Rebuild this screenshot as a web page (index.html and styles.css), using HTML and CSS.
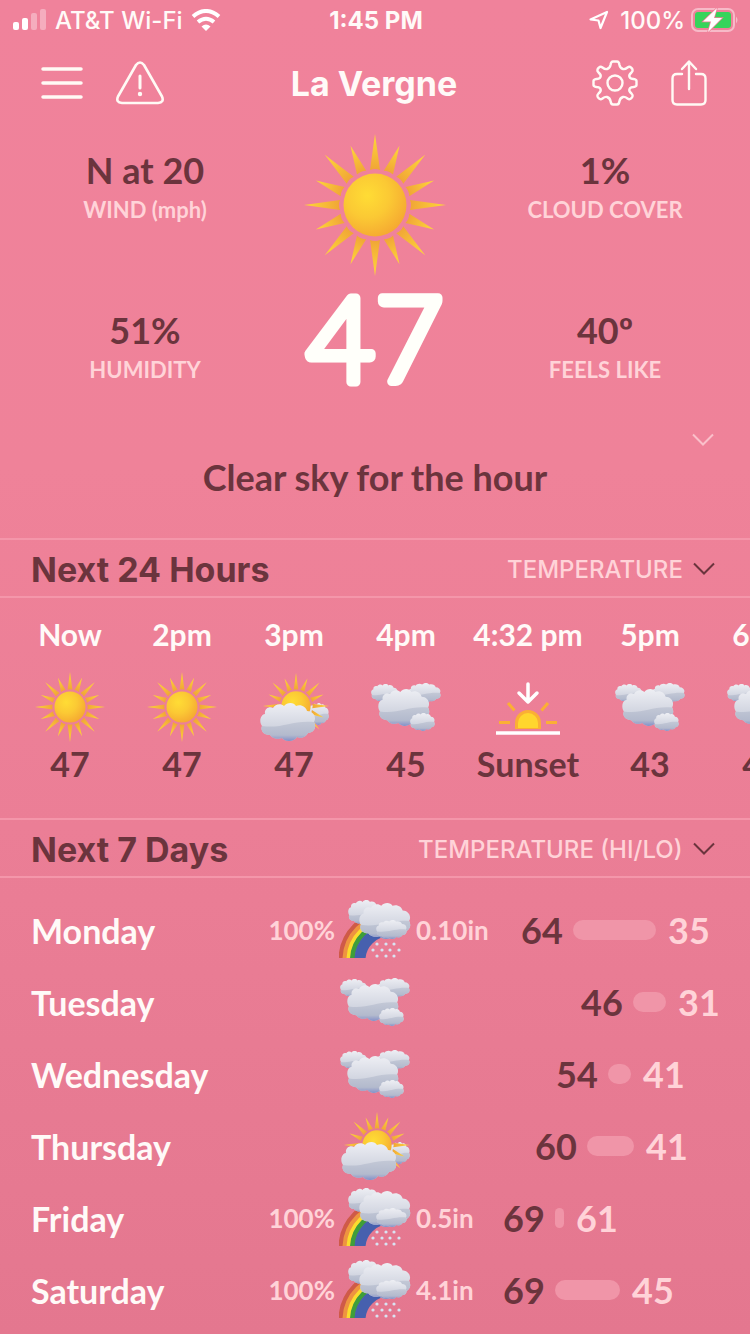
FILE: index.html
```html
<!DOCTYPE html>
<html lang="en">
<head>
  <meta charset="UTF-8">
  <meta name="viewport" content="width=device-width, initial-scale=1.0">
  <title>La Vergne</title>
  <link rel="stylesheet" href="styles.css">
</head>
<body>
  <!-- shared weather icons -->
  <svg class="sprite" width="0" height="0" aria-hidden="true">
    <defs>
      <radialGradient id="ball" cx="0.38" cy="0.35" r="0.7">
        <stop offset="0" stop-color="#ffdc35"/>
        <stop offset="0.5" stop-color="#fbc934"/>
        <stop offset="1" stop-color="#f5a831"/>
      </radialGradient>
      <linearGradient id="rayFill" x1="0" y1="0" x2="0" y2="1">
        <stop offset="0" stop-color="#ffd83a"/>
        <stop offset="1" stop-color="#f0a536"/>
      </linearGradient>
      <linearGradient id="cloudFill" x1="0" y1="0" x2="0" y2="1">
        <stop offset="0" stop-color="#eeeff4"/>
        <stop offset="0.7" stop-color="#ced2de"/>
        <stop offset="1" stop-color="#bcc3d4"/>
      </linearGradient>
      <linearGradient id="cloudShade" x1="0" y1="0" x2="0" y2="1">
        <stop offset="0" stop-color="#c3c8d6"/>
        <stop offset="0.7" stop-color="#b3bacd"/>
        <stop offset="1" stop-color="#8490c8"/>
      </linearGradient>
      <clipPath id="bowClip"><path d="M0 18H42V38L34 46L27 58H0Z"/></clipPath>
      <path id="ray" d="M71 0L76 36Q71 34 66 36Z" fill="url(#rayFill)"/>
      <path id="shortRay" d="M71 7L76 36Q71 34 66 36Z" fill="url(#rayFill)"/>
      <g id="rays">
        <use href="#ray"/>
        <use href="#ray" transform="rotate(45 71 71)"/>
        <use href="#ray" transform="rotate(90 71 71)"/>
        <use href="#ray" transform="rotate(135 71 71)"/>
        <use href="#ray" transform="rotate(180 71 71)"/>
        <use href="#ray" transform="rotate(225 71 71)"/>
        <use href="#ray" transform="rotate(270 71 71)"/>
        <use href="#ray" transform="rotate(315 71 71)"/>
        <use href="#shortRay" transform="rotate(22.5 71 71)"/>
        <use href="#shortRay" transform="rotate(67.5 71 71)"/>
        <use href="#shortRay" transform="rotate(112.5 71 71)"/>
        <use href="#shortRay" transform="rotate(157.5 71 71)"/>
        <use href="#shortRay" transform="rotate(202.5 71 71)"/>
        <use href="#shortRay" transform="rotate(247.5 71 71)"/>
        <use href="#shortRay" transform="rotate(292.5 71 71)"/>
        <use href="#shortRay" transform="rotate(337.5 71 71)"/>
      </g>
    </defs>
    <symbol id="sun" viewBox="0 0 142 142">
      <use href="#rays"/>
      <circle cx="71" cy="71" r="31.5" fill="url(#ball)"/>
    </symbol>
    <symbol id="cloud" viewBox="0 0 56 38" preserveAspectRatio="none">
      <path fill="url(#cloudFill)" d="M2 23C-1 19 0 12 5 11C4 6 9 3 13 5C15 1 21 0 24 3C27 -1 34 -1 36 3C41 1 46 4 47 8C53 8 57 14 54 19C57 24 54 30 48 30C46 34 41 36 37 34C34 39 25 39 22 35C17 37 12 35 10 32C4 32 0 28 2 23Z"/>
      <path fill="url(#cloudShade)" d="M2 23C22 26 32 17 54 19C57 24 54 30 48 30C46 34 41 36 37 34C34 39 25 39 22 35C17 37 12 35 10 32C4 32 0 28 2 23Z"/>
    </symbol>
    <symbol id="partly" viewBox="0 0 70 70">
      <use href="#cloud" x="48" y="31" width="22" height="22"/>
      <use href="#sun" x="4" y="1" width="66" height="66"/>
      <use href="#cloud" x="1" y="31" width="56" height="38"/>
    </symbol>
    <symbol id="cloudy" viewBox="0 0 70 70">
      <use href="#cloud" x="0" y="12" width="27" height="18"/>
      <use href="#cloud" x="37" y="11" width="33" height="20"/>
      <use href="#cloud" x="7" y="17" width="52" height="37"/>
      <use href="#cloud" x="39" y="41" width="25" height="18"/>
    </symbol>
    <symbol id="rainbow" viewBox="0 0 72 60">
      <g clip-path="url(#bowClip)" fill="none">
        <circle cx="50" cy="60" r="48" stroke="#cf5a48" stroke-width="5"/>
        <circle cx="50" cy="60" r="44" stroke="#ee9440" stroke-width="5"/>
        <circle cx="50" cy="60" r="40.5" stroke="#fbdc2e" stroke-width="4"/>
        <circle cx="50" cy="60" r="36.5" stroke="#3f9e3a" stroke-width="5"/>
        <circle cx="50" cy="60" r="29" stroke="#4660ae" stroke-width="11"/>
      </g>
      <use href="#cloud" x="9" y="0" width="34" height="25"/>
      <use href="#cloud" x="20" y="3" width="52" height="36"/>
      <use href="#cloud" x="37" y="20" width="31" height="19"/>
      <g fill="#d9e3f2">
        <circle cx="38" cy="44" r="1.6"/><circle cx="47" cy="44" r="1.6"/><circle cx="55" cy="44" r="1.6"/>
        <circle cx="34" cy="50" r="1.6"/><circle cx="43" cy="50" r="1.6"/><circle cx="51" cy="50" r="1.6"/><circle cx="60" cy="50" r="1.6"/>
        <circle cx="38" cy="56" r="1.6"/><circle cx="47" cy="56" r="1.6"/><circle cx="55" cy="56" r="1.6"/>
      </g>
    </symbol>
    <symbol id="sunset" viewBox="0 0 70 70">
      <path d="M22 57V51A13 13 0 0 1 48 51V57Z" fill="#fbaf34"/>
      <path d="M25 56V51A10 10 0 0 1 45 51V56Z" fill="#ffd62e"/>
      <path d="M6 50.500H17M53 50.500H64M15 31L21.500 38.500M55 31L48.500 38.500" stroke="#fbaf34" stroke-width="3" fill="none"/>
      <path d="M35 12V30M26 21L35 30L44 21" stroke="#fff" stroke-width="3.500" fill="none" stroke-linecap="round" stroke-linejoin="round"/>
      <path d="M3 61H67" stroke="#fff" stroke-width="3.500"/>
    </symbol>
    <symbol id="chevron" viewBox="0 0 22 14">
      <path d="M1 1.500L11 11.500L21 1.500" fill="none" stroke="currentColor" stroke-width="2"/>
    </symbol>
  </svg>

  <div class="status-bar">
    <div class="carrier">
      <svg width="34" height="22" viewBox="0 0 34 22" fill="#fff">
        <rect x="0" y="13" width="6" height="8" rx="2"/>
        <rect x="9" y="9" width="6" height="12" rx="2"/>
        <rect x="18" y="4" width="6" height="17" rx="2" opacity="0.35"/>
        <rect x="27" y="0" width="6" height="21" rx="2" opacity="0.35"/>
      </svg>
      <span>AT&amp;T Wi-Fi</span>
      <svg width="30" height="22" viewBox="0 0 30 22" fill="none" stroke="#fff" stroke-width="4">
        <path d="M2 7.500Q15 -3.500 28 7.500"/>
        <path d="M7 13Q15 6.500 23 13"/>
        <path d="M10.500 17.500Q15 13.500 19.500 17.500L15 22Z" fill="#fff" stroke="none"/>
      </svg>
    </div>
    <div class="clock">1:45 PM</div>
    <div class="battery">
      <svg width="20" height="20" viewBox="0 0 20 20" fill="none" stroke="#fff" stroke-width="2.200" stroke-linejoin="round">
        <path d="M1.500 9.500L18 2L11.500 18L9.500 10.500Z"/>
      </svg>
      <span>100%</span>
      <svg width="48" height="24" viewBox="0 0 48 24">
        <rect x="1" y="1" width="42" height="22" rx="6" fill="none" stroke="#fff" stroke-opacity="0.45" stroke-width="2"/>
        <path d="M45 8.500Q48 12 45 15.500Z" fill="#fff" fill-opacity="0.450"/>
        <rect x="4" y="4" width="36" height="16" rx="3" fill="#37d45b"/>
        <path d="M26 0L12 13.500H20L17 24L31 10H23Z" fill="#fff" stroke="#ef8199" stroke-width="1.500" paint-order="stroke"/>
      </svg>
    </div>
  </div>

  <header class="nav">
    <div class="nav-group">
      <button aria-label="Menu">
        <svg width="42" height="46" viewBox="0 0 42 46" stroke="#fffaf5" stroke-width="3.500" stroke-linecap="round">
          <path d="M2 9H40M2 23H40M2 37H40"/>
        </svg>
      </button>
      <button aria-label="Alerts">
        <svg width="48" height="46" viewBox="0 0 48 46" fill="none" stroke="#fffaf5" stroke-width="2.600" stroke-linecap="round" stroke-linejoin="round">
          <path d="M20 5Q24 0 28 5L46 36.500Q48.500 42.500 42 43H6Q-0.500 42.500 2 36.500Z"/>
          <path d="M24 16V28" stroke-width="3"/>
          <circle cx="24" cy="34" r="1.200" fill="#fffaf5" stroke-width="2"/>
        </svg>
      </button>
    </div>
    <h1>La Vergne</h1>
    <div class="nav-group nav-right">
      <button aria-label="Settings">
        <svg width="46" height="46" viewBox="0 0 46 46" fill="none" stroke="#fffaf5" stroke-width="2.400" stroke-linejoin="round">
          <path d="M18.500 5Q19 1.500 21 1.500H25Q27 1.500 27.500 5Q28 8 31 9Q33 9.500 35.500 7.500Q37.500 6 39 7.500Q42 10 39.500 12.500Q36.500 15 37.500 17Q38.500 19 41.500 19Q44.500 19.500 44.500 21V25Q44.500 26.500 41.500 27Q38.500 27 37.500 29Q36.500 31 39.500 33.500Q42 36 39 38.500Q37.500 40 35.500 38.500Q33 36.500 31 37Q28 38 27.500 41Q27 44.500 25 44.500H21Q19 44.500 18.500 41Q18 38 15 37Q13 36.500 10.500 38.500Q8.500 40 7 38.500Q4 36 6.500 33.500Q9.500 31 8.500 29Q7.500 27 4.500 27Q1.500 26.500 1.500 25V21Q1.500 19.500 4.500 19Q7.500 19 8.500 17Q9.500 15 6.500 12.500Q4 10 7 7.500Q8.500 6 10.500 7.500Q13 9.500 15 9Q18 8 18.500 5Z"/>
          <circle cx="23" cy="23" r="7.500"/>
        </svg>
      </button>
      <button aria-label="Share">
        <svg width="36" height="46" viewBox="0 0 36 46" fill="none" stroke="#fffaf5" stroke-width="2.400" stroke-linecap="round" stroke-linejoin="round">
          <path d="M11 14H6Q1.500 14 1.500 18.500V40Q1.500 44.500 6 44.500H30Q34.500 44.500 34.500 40V18.500Q34.500 14 30 14H25"/>
          <path d="M18 29V2M11 9L18 1.500L25 9"/>
        </svg>
      </button>
    </div>
  </header>

  <main>
    <section class="current">
      <dl class="stats">
        <div><dt>WIND (mph)</dt><dd>N at 20</dd></div>
        <div><dt>HUMIDITY</dt><dd>51%</dd></div>
      </dl>
      <div class="now">
        <svg class="now-icon" role="img" aria-label="Clear"><use href="#sun"/></svg>
        <svg class="now-temp" viewBox="0 0 170 112"><text x="85" y="98" text-anchor="middle">47</text></svg>
      </div>
      <dl class="stats">
        <div><dt>CLOUD COVER</dt><dd>1%</dd></div>
        <div><dt>FEELS LIKE</dt><dd>40º</dd></div>
      </dl>
    </section>

    <section class="summary">
      <button aria-label="Show more"><svg class="chevron"><use href="#chevron"/></svg></button>
      <p>Clear sky for the hour</p>
    </section>

    <section>
      <div class="section-head">
        <h2>Next 24 Hours</h2>
        <div class="picker">
          <select aria-label="Hourly data"><option>TEMPERATURE</option></select>
          <svg class="chevron"><use href="#chevron"/></svg>
        </div>
      </div>
      <ul class="hours">
        <li><span class="hour">Now</span><svg class="icon"><use href="#sun"/></svg><span class="temp">47</span></li>
        <li><span class="hour">2pm</span><svg class="icon"><use href="#sun"/></svg><span class="temp">47</span></li>
        <li><span class="hour">3pm</span><svg class="icon"><use href="#partly"/></svg><span class="temp">47</span></li>
        <li><span class="hour">4pm</span><svg class="icon"><use href="#cloudy"/></svg><span class="temp">45</span></li>
        <li class="wide"><span class="hour">4:32 pm</span><svg class="icon"><use href="#sunset"/></svg><span class="temp">Sunset</span></li>
        <li><span class="hour">5pm</span><svg class="icon"><use href="#cloudy"/></svg><span class="temp">43</span></li>
        <li><span class="hour">6pm</span><svg class="icon"><use href="#cloudy"/></svg><span class="temp">42</span></li>
      </ul>
    </section>

    <section>
      <div class="section-head">
        <h2>Next 7 Days</h2>
        <div class="picker">
          <select aria-label="Daily data"><option>TEMPERATURE (HI/LO)</option></select>
          <svg class="chevron"><use href="#chevron"/></svg>
        </div>
      </div>
      <ul class="days">
        <li>
          <span class="day">Monday</span><span class="chance">100%</span>
          <svg class="icon"><use href="#rainbow"/></svg><span class="amount">0.10in</span>
          <div class="range"><span class="hi" style="margin-left: 18px">64</span><i class="bar" style="width: 83px"></i><span class="lo">35</span></div>
        </li>
        <li>
          <span class="day">Tuesday</span><span class="chance"></span>
          <svg class="icon"><use href="#cloudy"/></svg><span class="amount"></span>
          <div class="range"><span class="hi" style="margin-left: 78px">46</span><i class="bar" style="width: 33px"></i><span class="lo">31</span></div>
        </li>
        <li>
          <span class="day">Wednesday</span><span class="chance"></span>
          <svg class="icon"><use href="#cloudy"/></svg><span class="amount"></span>
          <div class="range"><span class="hi" style="margin-left: 53px">54</span><i class="bar" style="width: 23px"></i><span class="lo">41</span></div>
        </li>
        <li>
          <span class="day">Thursday</span><span class="chance"></span>
          <svg class="icon"><use href="#partly"/></svg><span class="amount"></span>
          <div class="range"><span class="hi" style="margin-left: 32px">60</span><i class="bar" style="width: 47px"></i><span class="lo">41</span></div>
        </li>
        <li>
          <span class="day">Friday</span><span class="chance">100%</span>
          <svg class="icon"><use href="#rainbow"/></svg><span class="amount">0.5in</span>
          <div class="range"><span class="hi" style="margin-left: 0px">69</span><i class="bar" style="width: 9px"></i><span class="lo">61</span></div>
        </li>
        <li>
          <span class="day">Saturday</span><span class="chance">100%</span>
          <svg class="icon"><use href="#rainbow"/></svg><span class="amount">4.1in</span>
          <div class="range"><span class="hi" style="margin-left: 0px">69</span><i class="bar" style="width: 65px"></i><span class="lo">45</span></div>
        </li>
      </ul>
    </section>
  </main>
</body>
</html>
```
FILE: styles.css
```css
* {
  box-sizing: border-box;
}
body {
  margin: 0;
  min-height: 100vh;
  overflow-x: hidden;
  font-family: Lato, "Open Sans", sans-serif;
  font-weight: 700;
  color: #fffaf8;
  background: linear-gradient(#f0829b 0%, #ef8299 35%, #eb7e96 62%, #e4778f 100%);
}
h1, h2, p, ul, dl, dd {
  margin: 0;
  padding: 0;
}
ul {
  list-style: none;
}
svg {
  display: block;
  flex: none;
}
button {
  padding: 0;
  border: none;
  background: none;
  color: inherit;
  cursor: pointer;
}
.sprite {
  position: absolute;
}

/* status bar */
.status-bar {
  display: grid;
  grid-template-columns: 1fr auto 1fr;
  align-items: center;
  height: 40px;
  padding: 0 11px 0 13px;
  font-family: Inter, sans-serif;
  font-size: 24px;
  font-weight: 500;
}
.carrier, .battery {
  display: flex;
  align-items: center;
  gap: 8px;
}
.battery {
  justify-content: flex-end;
  gap: 6px;
}
.battery span {
  margin-left: 5px;
}
.clock {
  font-weight: 700;
}

/* top nav */
.nav {
  display: grid;
  grid-template-columns: 1fr auto 1fr;
  align-items: center;
  height: 86px;
  padding: 0 43px 0 41px;
}
.nav h1 {
  font-family: Inter, sans-serif;
  font-size: 34px;
  font-weight: 700;
}
.nav-group {
  display: flex;
  gap: 33px;
}
.nav-right {
  justify-content: flex-end;
}

/* current conditions */
.current {
  display: grid;
  grid-template-columns: 1fr 170px 1fr;
  padding: 8px 0 28px;
}
.stats {
  display: flex;
  flex-direction: column;
  gap: 86px;
  padding-top: 16px;
  text-align: center;
}
.stats div {
  display: flex;
  flex-direction: column-reverse;
  gap: 6px;
}
.stats dt {
  font-size: 22px;
  line-height: 28px;
  color: #ffd3d8;
}
.stats dd {
  font-size: 36px;
  line-height: 40px;
  color: #6b343d;
}
.now {
  display: flex;
  flex-direction: column;
  align-items: center;
}
.now-icon {
  width: 142px;
  height: 142px;
}
.now-temp {
  width: 170px;
  height: 112px;
  margin-top: 8px;
  font-size: 118px;
  font-weight: 300;
  fill: #fffffa;
  stroke: #fffffa;
  stroke-width: 9px;
  stroke-linejoin: round;
}
.summary {
  display: flex;
  flex-direction: column;
  padding: 4px 0 41px;
  text-align: center;
}
.summary button {
  align-self: flex-end;
  margin-right: 36px;
  padding: 5px 0;
  color: #fac0ca;
}
.summary p {
  margin-top: 5px;
  font-size: 36px;
  line-height: 40px;
  color: #6b343d;
}
.chevron {
  width: 22px;
  height: 14px;
}

/* section headers */
.section-head {
  display: flex;
  justify-content: space-between;
  align-items: center;
  height: 60px;
  padding: 2px 35px 0 31px;
  border-top: 2px solid #f496aa;
  border-bottom: 2px solid #f496aa;
  font-family: Inter, sans-serif;
  color: #6b343d;
}
.section-head h2 {
  font-size: 34px;
  font-weight: 700;
}
.picker {
  display: flex;
  align-items: center;
  gap: 10px;
}
.picker select {
  appearance: none;
  padding: 0;
  border: none;
  background: none;
  font-family: inherit;
  font-size: 24px;
  font-weight: 500;
  color: #ffd3d8;
}

/* hourly strip */
.hours {
  display: flex;
  height: 220px;
  padding: 16px 0 0 14px;
  overflow: hidden;
}
.hours li {
  display: flex;
  flex: none;
  flex-direction: column;
  align-items: center;
  width: 112px;
}
.hours .wide {
  width: 132px;
}
.hour {
  font-size: 30px;
  line-height: 40px;
}
.hours .icon {
  width: 70px;
  height: 70px;
  margin: 18px 0 2px;
}
.temp {
  font-size: 34px;
  line-height: 40px;
  color: #6b343d;
}

/* daily list */
.days {
  padding: 16px 0 8px;
}
.days li {
  display: grid;
  grid-template-columns: 1fr 88px 72px 88px 1fr;
  align-items: center;
  height: 72px;
}
.day {
  padding-left: 31px;
  font-size: 34px;
}
.chance, .amount {
  font-size: 26px;
  color: #ffd3d8;
}
.chance {
  padding-right: 4px;
  text-align: right;
}
.amount {
  padding-left: 5px;
}
.days .icon {
  width: 72px;
  height: 70px;
}
.range {
  display: flex;
  align-items: center;
  padding-left: 4px;
  font-size: 36px;
}
.hi {
  width: 52px;
  color: #6b343d;
}
.bar {
  height: 20px;
  border-radius: 10px;
  background: #f095a8;
}
.lo {
  margin-left: 12px;
  color: #ffd3d8;
}
```
